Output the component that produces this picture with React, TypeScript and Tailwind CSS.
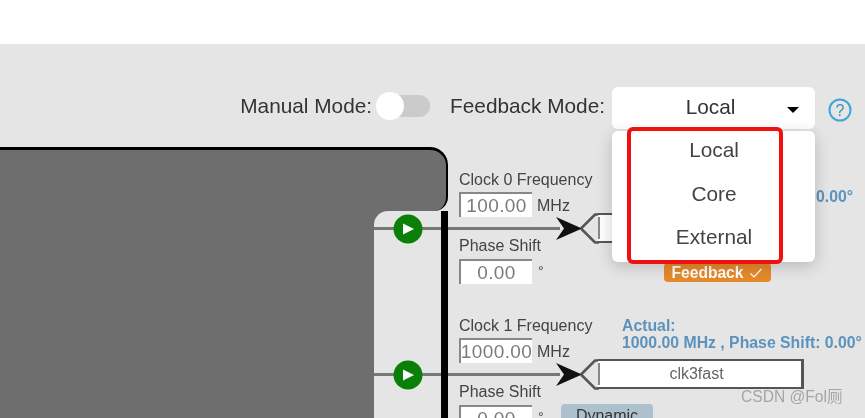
import React from "react";

const font = "font-['Liberation_Sans',Arial,sans-serif]";

const PlayDot = () => (
  <svg width="30" height="30" viewBox="0 0 30 30" className="shrink-0">
    <circle cx="15" cy="15" r="14.5" fill="#0a8008" />
    <path d="M10 9.5 L21 15 L10 20.5 Z" fill="#fff" />
  </svg>
);

const Wire = ({ className }: { className: string }) => (
  <div className={`h-[3px] bg-[#777] ${className}`} />
);

const NumBox = ({ value, className = "" }: { value: string; className?: string }) => (
  <div
    className={`w-[73px] bg-white border-l-2 border-t-2 border-[#888] flex items-center justify-center text-[19px] tracking-[0.4px] text-[#7b7b7b] leading-none ${className}`}
  >
    {value}
  </div>
);

interface ClockRowProps {
  index: number;
  freq: string;
  actual: string;
  name: string;
  tag: React.ReactNode;
  tagClass: string;
}

const ClockRow = ({ index, freq, actual, name, tag, tagClass }: ClockRowProps) => (
  <div className="relative h-[146px] shrink-0 pl-[11px]">
    <div className="text-[16px] leading-[17px] text-[#444] h-[17px] whitespace-nowrap">Clock {index} Frequency</div>
    <div className="flex items-end gap-[5px] mt-[4px]">
      <NumBox value={freq} className="h-[25px]" />
      <span className="text-[16px] leading-[17px] text-[#444] mb-[3px]">MHz</span>
    </div>
    <div className="mt-[20px] text-[16px] leading-[17px] text-[#444] h-[17px]">Phase Shift</div>
    <div className="flex items-start gap-[5px] mt-[5px]">
      <NumBox value="0.00" className="h-[25px]" />
      <span className="text-[14px] leading-[17px] text-[#444] ml-[1px] mt-[4px]">°</span>
    </div>

    {/* wire + arrow + output port */}
    <Wire className="absolute left-0 top-[56px] w-[112px]" />
    <svg width="50" height="34" viewBox="0 0 50 34" className="absolute left-[105px] top-[40px]">
      <path d="M3 6 L29 17.5 L3 29 L11 17.5 Z" fill="#111" />
      <path d="M28 17.5 L42 3.5 L46 3.5" stroke="#555" strokeWidth="2.5" fill="none" />
      <path d="M28 17.5 L42 31.5 L46 31.5" stroke="#555" strokeWidth="2.5" fill="none" />
    </svg>
    <div className="absolute left-[150px] top-[42px] w-[206px] h-[30px] pr-[6px] border-y-2 border-r-[3px] border-[#555] bg-white flex items-center justify-center text-[16px] text-[#666]">
      <div className="absolute left-0 top-[2px] bottom-[2px] w-[2px] bg-[#888]" />
      {name}
    </div>

    <div className="absolute left-[174px] top-0 text-[15.8px] leading-[17px] font-bold text-[#5b93bd] whitespace-nowrap">
      <div>Actual:</div>
      <div>{actual}</div>
    </div>
    <div className={`absolute rounded-[4px] flex items-center justify-center ${tagClass}`}>{tag}</div>
  </div>
);

export default function App() {
  return (
    <div className={`relative w-[865px] h-[418px] overflow-hidden bg-[#e5e5e5] ${font} flex flex-col blur-[0.5px]`}>
      <div className="h-[44px] bg-white shrink-0" />

      {/* toolbar */}
      <div className="h-[103px] shrink-0 flex justify-end items-start pt-[43px] pr-[13px] text-[20.8px] text-[#333] whitespace-nowrap">
        <span className="leading-[38px]">Manual Mode:</span>
        <div className="relative ml-[8px] w-[50px] h-[22px] mt-[8px] rounded-full bg-[#cbcbcb]">
          <div className="absolute left-[-4px] top-[-3px] w-[28px] h-[28px] rounded-full bg-white" />
        </div>
        <span className="ml-[20px] leading-[38px]">Feedback Mode:</span>
        <div className="relative ml-[7px] w-[203px] h-[42px] rounded-md bg-white flex items-center justify-center pr-[6px]">
          <span className="text-[#333] text-[20.8px] leading-[40px] self-start">Local</span>
          <div className="absolute right-[16px] top-[20px] w-0 h-0 border-x-[6px] border-x-transparent border-t-[6px] border-t-black" />
        </div>
        <svg width="24" height="24" viewBox="0 0 24 24" className="ml-[13px] mt-[11px]">
          <circle cx="12" cy="12" r="10.5" fill="none" stroke="#3da5d9" strokeWidth="2" />
          <text x="12" y="17.5" textAnchor="middle" fontSize="16" fill="#3d8fc0" fontFamily="Liberation Sans">?</text>
        </svg>
      </div>

      {/* diagram */}
      <div className="flex-1 flex min-h-0">
        <div className="w-[448px] shrink-0 flex flex-col bg-[#6e6e6e] relative">
          <div className="h-[64px] shrink-0 bg-[#e5e5e5]">
            <div className="h-full border-t-[3px] border-r-[2px] border-black rounded-tr-[18px] rounded-br-[14px] bg-[#6e6e6e]" />
          </div>
          <div className="flex-1 flex min-h-0">
            <div className="w-[374px] shrink-0" />
            <div className="flex-1 bg-[#e5e5e5] rounded-tl-[14px] flex">
              <div className="flex-1 flex flex-col pt-[3px] gap-[116px]">
                <div className="relative h-[30px] flex justify-center">
                  <Wire className="absolute left-0 right-0 top-[13px]" />
                  <div className="relative"><PlayDot /></div>
                </div>
                <div className="relative h-[30px] flex justify-center">
                  <Wire className="absolute left-0 right-0 top-[13px]" />
                  <div className="relative"><PlayDot /></div>
                </div>
              </div>
              <div className="w-[7px] bg-black shrink-0" />
            </div>
          </div>
        </div>

        <div className="flex-1 flex flex-col pt-[24px] min-w-0">
          <ClockRow
            index={0}
            freq="100.00"
            actual="100.00 MHz , Phase Shift: 0.00°"
            name="clk0"
            tag={
              <span className="flex items-center gap-[6px]">
                Feedback
                <svg width="14" height="12" viewBox="0 0 14 12">
                  <path d="M1.5 6.5 L5 10 L12.5 2" stroke="#fff" strokeWidth="1.2" fill="none" />
                </svg>
              </span>
            }
            tagClass="left-[216px] top-[92px] w-[107px] h-[19px] bg-[#e58a2a] text-white text-[15.6px] font-bold"
          />
          <ClockRow
            index={1}
            freq="1000.00"
            actual="1000.00 MHz , Phase Shift: 0.00°"
            name="clk3fast"
            tag="Dynamic"
            tagClass="left-[113px] top-[87px] w-[92px] h-[24px] bg-[#adc0ce] text-[#333] text-[16px]"
          />
        </div>
      </div>

      {/* open select menu */}
      <div className="absolute left-[612px] top-[131px] w-[203px] h-[131px] rounded-md bg-white shadow-[0_4px_16px_rgba(0,0,0,0.2)] flex flex-col items-center gap-[6px] pl-[1px] text-[20.8px] text-[#444]">
        <div className="h-[38px] flex items-center">Local</div>
        <div className="h-[38px] flex items-center">Core</div>
        <div className="h-[36px] flex items-center">External</div>
      </div>

      {/* red annotation */}
      <div className="absolute left-[627px] top-[127px] w-[156px] h-[137px] border-[4px] border-[#f01010] rounded-md" />

      {/* watermark */}
      <div className="absolute left-[741px] top-[387px] text-[15.6px] leading-[20px] text-[#a5a5a5] font-['Liberation_Sans','Noto_Sans_CJK_SC',sans-serif]">
        CSDN @Fol厕
      </div>
    </div>
  );
}
